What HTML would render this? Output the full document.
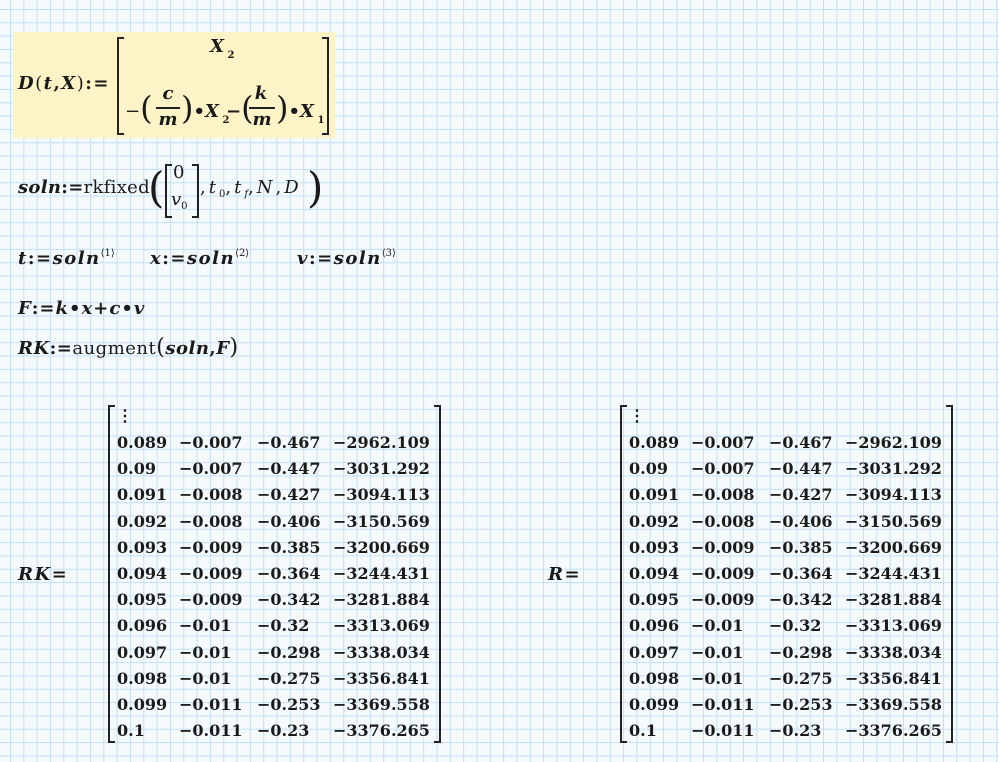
<!DOCTYPE html>
<html><head><meta charset="utf-8"><style>
html,body{margin:0;padding:0}
body{width:999px;height:762px;overflow:hidden;position:relative;background-color:#f5fafc;
background-image:linear-gradient(to right,#c6def2 1px,transparent 1px),linear-gradient(to bottom,#c6def2 1px,transparent 1px);
background-size:13.333px 13.333px;background-position:10px 9px;
font-family:"DejaVu Serif","Liberation Serif",serif;color:#1a1a1a;font-weight:bold}
.a{position:absolute;white-space:nowrap;line-height:20px}
i{font-style:italic}
.t{font-size:18px;letter-spacing:1.5px}
.s{letter-spacing:0}
.n{font-size:16px}
.br{position:absolute;border:2px solid #222;}
.L{border-right:none;width:5px}
.R{border-left:none;width:5px}
sub{font-size:10px;vertical-align:-6px;letter-spacing:0}
sup{font-size:10px;vertical-align:8px;font-weight:normal;letter-spacing:0}
.p{font-weight:normal}
</style></head><body>
<div style="position:absolute;left:13px;top:32px;width:322px;height:106px;background:#fcf3c6"></div>
<div class="a t" style="left:18px;top:74px"><i>D</i><span class="p">(</span><i>t</i>,<i>X</i><span class="p">)</span>:=</div>
<div class="br L" style="left:117px;top:37px;height:94px"></div>
<div class="br R" style="left:322px;top:37px;height:94px"></div>
<div class="a t s" style="left:210px;top:37px"><i>X</i><sub>&nbsp;2</sub></div>
<div class="a t s" style="left:125px;top:96px"><span class="p">−</span><span style="font-size:32px;font-weight:normal;position:relative;top:2px">(</span></div>
<div class="a t s" style="left:157px;top:84px;width:22px;text-align:center"><i>c</i></div>
<div style="position:absolute;left:156px;top:107px;width:24px;height:1.5px;background:#222"></div>
<div class="a t s" style="left:152px;top:110px;width:32px;text-align:center"><i>m</i></div>
<div class="a t s" style="left:181px;top:96px"><span style="font-size:32px;font-weight:normal;position:relative;top:2px">)</span>•<i>X</i><sub>&nbsp;2</sub></div>
<div class="a t s" style="left:226px;top:96px">−<span style="font-size:32px;font-weight:normal;position:relative;top:2px">(</span></div>
<div class="a t s" style="left:250px;top:84px;width:22px;text-align:center"><i>k</i></div>
<div style="position:absolute;left:249px;top:107px;width:26px;height:1.5px;background:#222"></div>
<div class="a t s" style="left:246px;top:110px;width:32px;text-align:center"><i>m</i></div>
<div class="a t s" style="left:276px;top:96px"><span style="font-size:32px;font-weight:normal;position:relative;top:2px">)</span>•<i>X</i><sub>&nbsp;1</sub></div>

<div class="a t" style="left:18px;top:178px;letter-spacing:0.3px"><i>soln</i>:=<span class="p">rkfixed</span></div>
<div class="a" style="left:148px;top:163px;font-size:42px;line-height:50px;font-weight:normal">(</div>
<div class="br L" style="left:165px;top:164px;height:50px"></div>
<div class="br R" style="left:192px;top:164px;height:50px"></div>
<div class="a t s" style="left:173px;top:163px;font-weight:normal">0</div>
<div class="a t s" style="left:171px;top:190px;font-weight:normal"><i>v</i><sub style="vertical-align:-4px">0</sub></div>
<div class="a t" style="left:200px;top:178px;font-weight:normal;letter-spacing:3px">,<i>t</i><sub style="vertical-align:-4px">0</sub>,<i>t</i><sub style="vertical-align:-4px"><i>f</i></sub>,<i>N</i>,<i>D</i></div>
<div class="a" style="left:307px;top:163px;font-size:42px;line-height:50px;font-weight:normal">)</div>

<div class="a t" style="left:18px;top:244px"><i>t</i>:=<i>soln</i><sup>⟨1⟩</sup></div>
<div class="a t" style="left:150px;top:244px"><i>x</i>:=<i>soln</i><sup>⟨2⟩</sup></div>
<div class="a t" style="left:297px;top:244px"><i>v</i>:=<i>soln</i><sup>⟨3⟩</sup></div>

<div class="a t" style="left:18px;top:299px;letter-spacing:1px"><i>F</i>:=<i>k</i>•<i>x</i>+<i>c</i>•<i>v</i></div>
<div class="a t" style="left:18px;top:338px;letter-spacing:0.5px"><i>RK</i>:=<span class="p">augment</span><span class="p" style="font-size:22px">(</span><i>soln</i>,<i>F</i><span class="p" style="font-size:22px">)</span></div>

<div class="a t" style="left:18px;top:565px"><i>RK</i>=</div>
<div class="a t" style="left:548px;top:565px"><i>R</i>=</div>

<div id="m1"></div>
<script>
var rows=[["0.089","−0.007","−0.467","−2962.109"],["0.09","−0.007","−0.447","−3031.292"],["0.091","−0.008","−0.427","−3094.113"],["0.092","−0.008","−0.406","−3150.569"],["0.093","−0.009","−0.385","−3200.669"],["0.094","−0.009","−0.364","−3244.431"],["0.095","−0.009","−0.342","−3281.884"],["0.096","−0.01","−0.32","−3313.069"],["0.097","−0.01","−0.298","−3338.034"],["0.098","−0.01","−0.275","−3356.841"],["0.099","−0.011","−0.253","−3369.558"],["0.1","−0.011","−0.23","−3376.265"]];
var h="";
[0,512].forEach(function(o){
 h+='<div class="br L" style="left:'+(108+o)+'px;top:405px;height:334px"></div>';
 h+='<div class="br R" style="left:'+(434+o)+'px;top:405px;height:334px"></div>';
 h+='<div class="a n" style="left:'+(117+o)+'px;top:406px">⋮</div>';
 var xs=[117,179,257,333];
 rows.forEach(function(r,i){var y=433+i*26.2;
  r.forEach(function(v,j){h+='<div class="a n" style="left:'+(xs[j]+o)+'px;top:'+y+'px">'+v+'</div>';});
 });
});
document.getElementById("m1").innerHTML=h;
</script>
</body></html>
